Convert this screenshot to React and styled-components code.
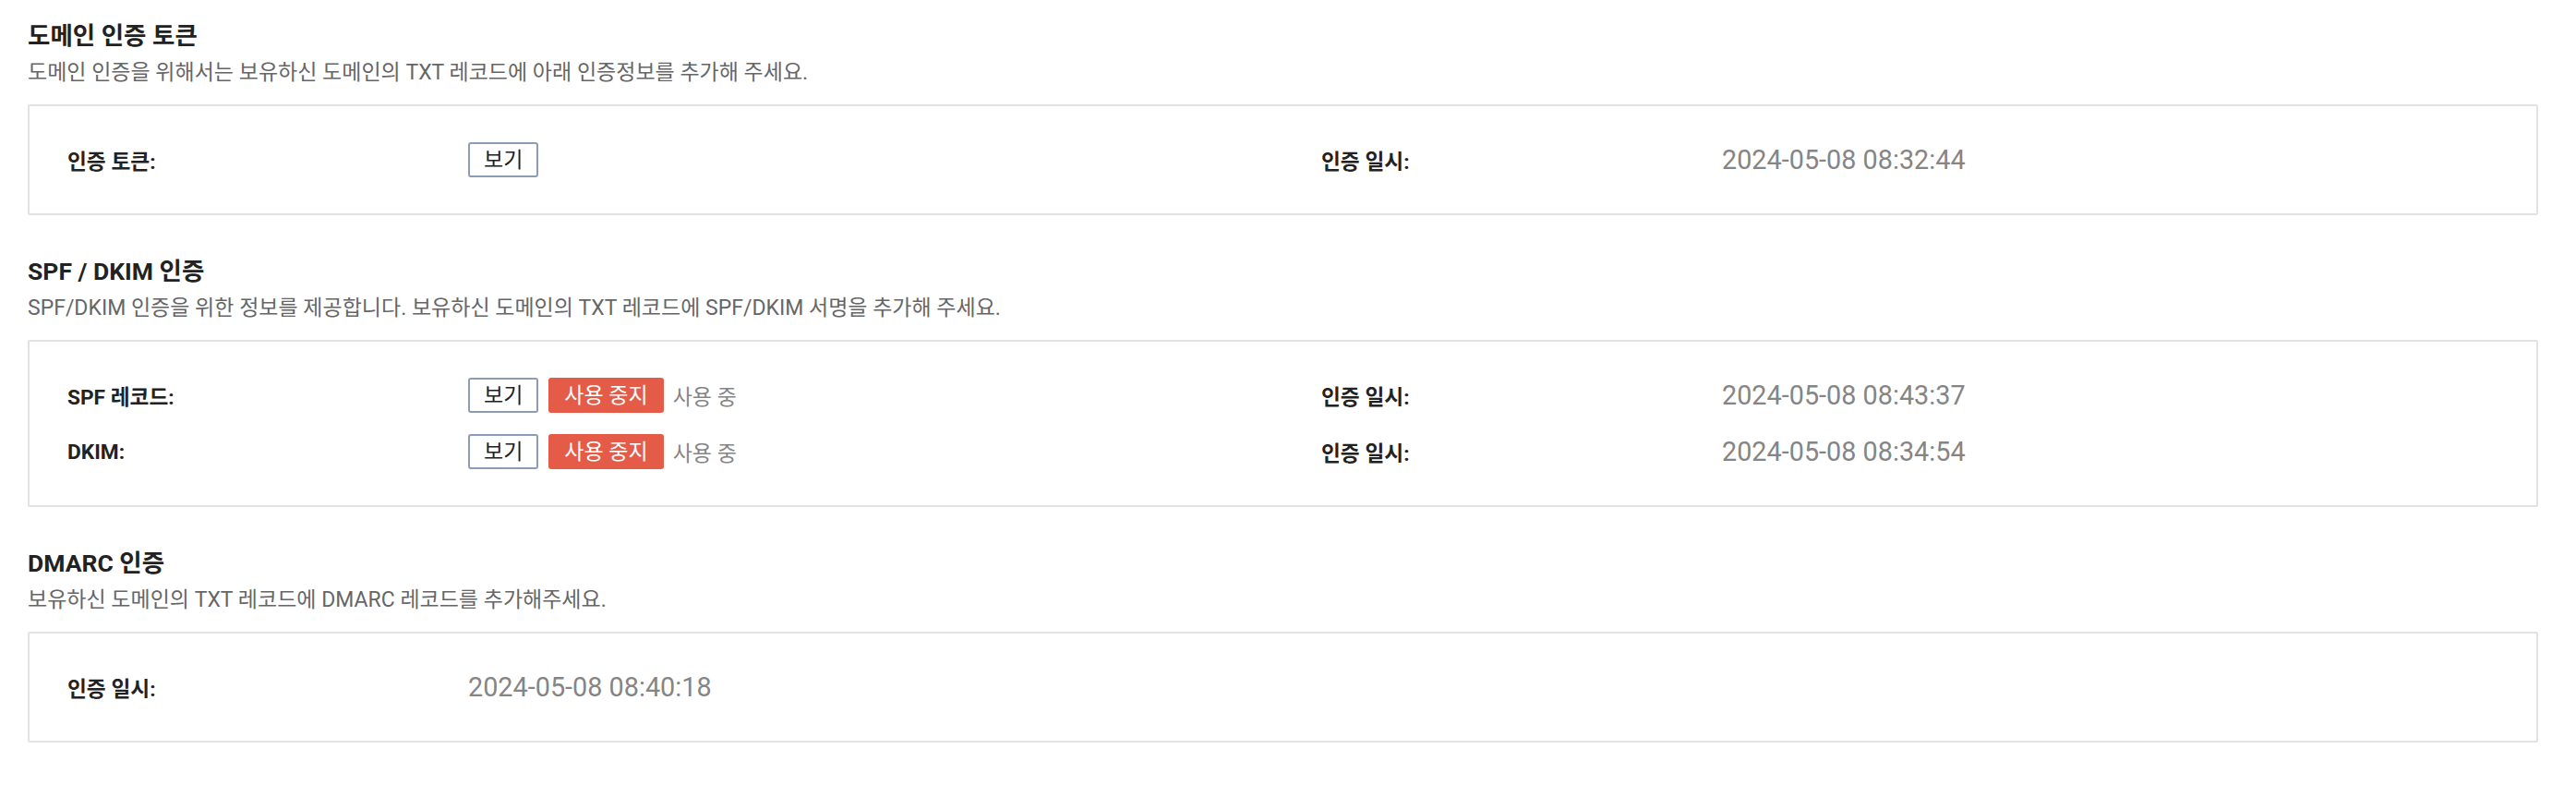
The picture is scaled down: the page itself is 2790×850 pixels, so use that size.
import React from "react";
import styled, { createGlobalStyle } from "styled-components";

const GlobalStyle = createGlobalStyle`
  html, body {
    margin: 0;
    padding: 0;
    background: #fff;
  }
  body {
    font-family: Roboto, "Noto Sans CJK KR", sans-serif;
    color: #222;
  }
`;

const Page = styled.div`
  padding: 23px 41px 0 30px;
`;

const Section = styled.section`
  margin-bottom: 45px;
`;

const Title = styled.h3`
  margin: 0;
  font-size: 26.5px;
  line-height: 32px;
  font-weight: 700;
  color: #222;
`;

const Desc = styled.p`
  margin: 9px 0 19px;
  font-size: 23px;
  line-height: 30px;
  color: #666;
`;

const Box = styled.div`
  border: 2px solid #e2e2e2;
  border-radius: 2px;
  padding: 39px 41px;
  display: flex;
  flex-direction: column;
  gap: 23px;
`;

const Row = styled.div`
  display: grid;
  grid-template-columns: 434px 924px 434px 1fr;
  align-items: center;
  min-height: 38px;
`;

const Label = styled.div`
  font-size: 22.7px;
  font-weight: 700;
  color: #222;
`;

const Value = styled.div`
  display: flex;
  align-items: center;
  font-size: ${(p) => (p.$date ? "28.8px" : "23px")};
  color: #858585;
`;

const Button = styled.button`
  height: 38px;
  box-sizing: border-box;
  padding: 0 ${(p) => (p.$danger ? "17px" : "15px")};
  margin-right: ${(p) => (p.$danger ? "10px" : "11px")};
  font-family: inherit;
  font-size: 23px;
  line-height: 1;
  border-radius: 3px;
  cursor: pointer;
  border: ${(p) => (p.$danger ? "none" : "2px solid #8c9cb6")};
  background: ${(p) => (p.$danger ? "#e45c48" : "#fff")};
  color: ${(p) => (p.$danger ? "#fff" : "#222")};
`;

const Status = styled.span`
  font-size: 23px;
  color: #858585;
`;

const sections = [
  {
    title: "도메인 인증 토큰",
    desc: "도메인 인증을 위해서는 보유하신 도메인의 TXT 레코드에 아래 인증정보를 추가해 주세요.",
    rows: [{ label: "인증 토큰:", toggle: false, date: "2024-05-08 08:32:44" }],
  },
  {
    title: "SPF / DKIM 인증",
    desc: "SPF/DKIM 인증을 위한 정보를 제공합니다. 보유하신 도메인의 TXT 레코드에 SPF/DKIM 서명을 추가해 주세요.",
    rows: [
      { label: "SPF 레코드:", toggle: true, date: "2024-05-08 08:43:37" },
      { label: "DKIM:", toggle: true, date: "2024-05-08 08:34:54" },
    ],
  },
];

const App = () => {
  return (
    <Page>
      <GlobalStyle />

      {sections.map((s, i) => (
        <Section key={i}>
          <Title>{s.title}</Title>
          <Desc>{s.desc}</Desc>
          <Box>
            {s.rows.map((r, j) => (
              <Row key={j}>
                <Label>{r.label}</Label>
                <Value>
                  <Button>보기</Button>
                  {r.toggle && (
                    <>
                      <Button $danger>사용 중지</Button>
                      <Status>사용 중</Status>
                    </>
                  )}
                </Value>
                <Label>인증 일시:</Label>
                <Value $date>{r.date}</Value>
              </Row>
            ))}
          </Box>
        </Section>
      ))}

      {/* dmarc */}
      <Section>
        <Title>DMARC 인증</Title>
        <Desc>보유하신 도메인의 TXT 레코드에 DMARC 레코드를 추가해주세요.</Desc>
        <Box>
          <Row>
            <Label>인증 일시:</Label>
            <Value $date>2024-05-08 08:40:18</Value>
          </Row>
        </Box>
      </Section>
    </Page>
  );
};

export default App;
